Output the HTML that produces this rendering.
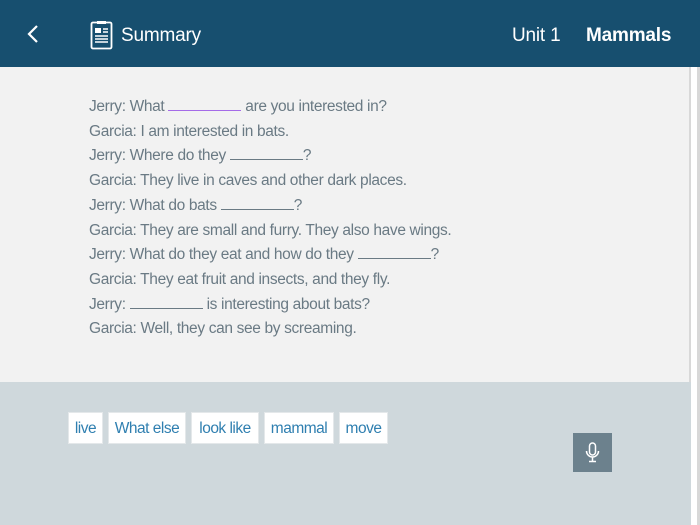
<!DOCTYPE html>
<html><head><style>
body{margin:0;width:700px;height:525px;overflow:hidden;background:#fff;font-family:"Liberation Sans",sans-serif;position:relative}
.hdr{position:absolute;left:0;top:0;width:700px;height:67px;background:#174f6f;color:#fff}
.hdr .t{position:absolute;top:25px;font-size:19px;letter-spacing:-0.2px}
.main{position:absolute;left:0;top:67px;width:689px;height:315px;background:#f2f2f2;border-right:2px solid #d8d8d8}
.lines{position:absolute;left:89px;top:28px;font-size:15.5px;color:#6a7a84;line-height:24.7px;letter-spacing:-0.35px}
.bl{display:inline-block;width:73px;border-bottom:1px solid #6a7a84;height:14px;vertical-align:baseline}
.bot{position:absolute;left:0;top:382px;width:691px;height:143px;background:#cfd8dc}
.chip{position:absolute;top:30px;height:32px;background:#fff;border:1px solid #e4e8ea;color:#2f7fb0;font-size:15.5px;line-height:31px;box-sizing:border-box;text-align:center;letter-spacing:-0.5px}
.mic{position:absolute;left:573px;top:51px;width:39px;height:39px;background:#6c818d}
.sb{position:absolute;left:697px;top:67px;width:3px;height:458px;background:#d8d8d8}
</style></head><body>
<div class="hdr">
<svg style="position:absolute;left:26px;top:24px" width="14" height="20" viewBox="0 0 14 20"><path d="M11 2 L3 10 L11 18" fill="none" stroke="#fff" stroke-width="2.2"/></svg>
<svg style="position:absolute;left:90px;top:20px" width="24" height="30" viewBox="0 0 24 30"><rect x="1.5" y="2.5" width="20" height="26" rx="1.5" fill="none" stroke="#fff" stroke-width="1.8"/><rect x="7" y="1" width="9" height="3" fill="#fff"/><rect x="5" y="8" width="6" height="5" fill="#fff"/><path d="M13 9h5M13 12h5M5 16h13M5 19h13M5 22h13" stroke="#fff" stroke-width="1.4"/></svg>
<div class="t" style="left:121px">Summary</div>
<div class="t" style="left:512px">Unit 1</div>
<div class="t" style="left:586px;font-weight:bold">Mammals</div>
</div>
<div class="main"><div class="lines">
Jerry: What <span class="bl" style="border-color:#a56be8"></span> are you interested in?<br>
Garcia: I am interested in bats.<br>
Jerry: Where do they <span class="bl"></span>?<br>
Garcia: They live in caves and other dark places.<br>
Jerry: What do bats <span class="bl"></span>?<br>
Garcia: They are small and furry. They also have wings.<br>
Jerry: What do they eat and how do they <span class="bl"></span>?<br>
Garcia: They eat fruit and insects, and they fly.<br>
Jerry: <span class="bl"></span> is interesting about bats?<br>
Garcia: Well, they can see by screaming.
</div></div>
<div class="bot">
<div class="chip" style="left:68px;width:35px">live</div>
<div class="chip" style="left:108px;width:78px">What else</div>
<div class="chip" style="left:191px;width:68px">look like</div>
<div class="chip" style="left:264px;width:70px">mammal</div>
<div class="chip" style="left:339px;width:49px">move</div>
<div class="mic"><svg width="39" height="39" viewBox="0 0 39 39"><rect x="16.5" y="10" width="6" height="12" rx="3" fill="none" stroke="#fff" stroke-width="1.5"/><path d="M13.5 18a6 6 0 0 0 12 0M19.5 24v4M16 28.5h7" fill="none" stroke="#fff" stroke-width="1.5"/></svg></div>
</div>
<div class="sb"></div>
</body></html>
